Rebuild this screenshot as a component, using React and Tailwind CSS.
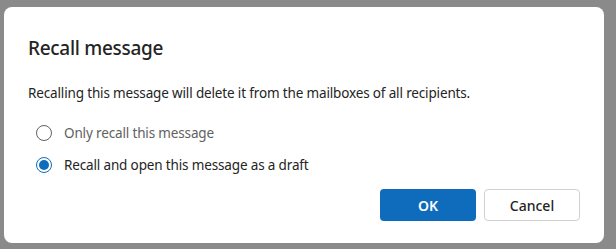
import { useState } from 'react'

function Radio({ checked, label, onSelect }) {
  return (
    <label className="flex h-8 cursor-pointer items-center gap-3 pl-2" onClick={onSelect}>
      <span
        className={
          'flex h-4 w-4 shrink-0 items-center justify-center rounded-full border ' +
          (checked ? 'border-[#0f6cbd]' : 'border-[#616161]')
        }
      >
        {checked && <span className="h-2.5 w-2.5 rounded-full bg-[#0f6cbd]" />}
      </span>
      <span className={'text-[13.5px] leading-5 tracking-[-0.15px] ' + (checked ? 'text-[#242424]' : 'text-[#616161]')}>
        {label}
      </span>
    </label>
  )
}

export default function App() {
  const [choice, setChoice] = useState('draft')
  return (
    <div className="h-[249px] w-[616px] overflow-hidden bg-[#8a8a8a] pl-1 pt-[7px] font-['Noto_Sans',sans-serif] text-[#242424]">
      <div className="flex h-[236px] w-[600px] flex-col rounded-lg bg-white px-6 pb-[22px] pt-[27px]">
        <h1 className="text-[19px] font-medium leading-7 tracking-[-0.3px]">Recall message</h1>
        <p className="mt-[21px] text-[13.5px] leading-5 tracking-[-0.15px]">
          Recalling this message will delete it from the mailboxes of all recipients.
        </p>
        <div className="mt-[14px] flex flex-col">
          <Radio checked={choice === 'only'} label="Only recall this message" onSelect={() => setChoice('only')} />
          <Radio checked={choice === 'draft'} label="Recall and open this message as a draft" onSelect={() => setChoice('draft')} />
        </div>
        <div className="mt-2 flex justify-end gap-2">
          <button className="h-8 w-24 rounded bg-[#0f6cbd] text-[14px] font-semibold text-white">OK</button>
          <button className="h-8 w-24 rounded border border-[#d1d1d1] bg-white text-[14px] font-medium text-[#242424]">
            Cancel
          </button>
        </div>
      </div>
    </div>
  )
}
